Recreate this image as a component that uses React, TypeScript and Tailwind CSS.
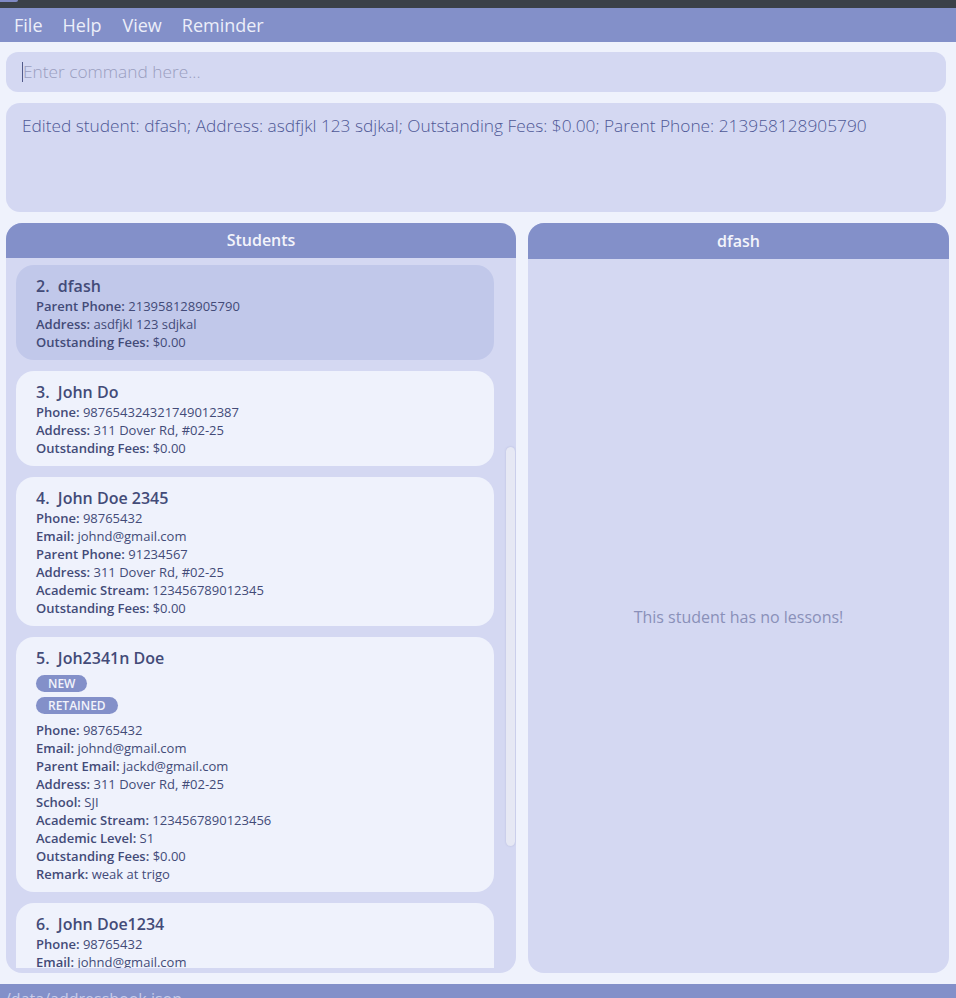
import React from 'react';

type Field = { label: string; value: string };

interface Student {
  index: number;
  name: string;
  tags?: string[];
  fields: Field[];
  selected?: boolean;
}

const STUDENTS: Student[] = [
  {
    index: 2,
    name: 'dfash',
    selected: true,
    fields: [
      { label: 'Parent Phone', value: '213958128905790' },
      { label: 'Address', value: 'asdfjkl 123 sdjkal' },
      { label: 'Outstanding Fees', value: '$0.00' },
    ],
  },
  {
    index: 3,
    name: 'John Do',
    fields: [
      { label: 'Phone', value: '987654324321749012387' },
      { label: 'Address', value: '311 Dover Rd, #02-25' },
      { label: 'Outstanding Fees', value: '$0.00' },
    ],
  },
  {
    index: 4,
    name: 'John Doe 2345',
    fields: [
      { label: 'Phone', value: '98765432' },
      { label: 'Email', value: 'johnd@gmail.com' },
      { label: 'Parent Phone', value: '91234567' },
      { label: 'Address', value: '311 Dover Rd, #02-25' },
      { label: 'Academic Stream', value: '123456789012345' },
      { label: 'Outstanding Fees', value: '$0.00' },
    ],
  },
  {
    index: 5,
    name: 'Joh2341n Doe',
    tags: ['NEW', 'RETAINED'],
    fields: [
      { label: 'Phone', value: '98765432' },
      { label: 'Email', value: 'johnd@gmail.com' },
      { label: 'Parent Email', value: 'jackd@gmail.com' },
      { label: 'Address', value: '311 Dover Rd, #02-25' },
      { label: 'School', value: 'SJI' },
      { label: 'Academic Stream', value: '1234567890123456' },
      { label: 'Academic Level', value: 'S1' },
      { label: 'Outstanding Fees', value: '$0.00' },
      { label: 'Remark', value: 'weak at trigo' },
    ],
  },
  {
    index: 6,
    name: 'John Doe1234',
    fields: [
      { label: 'Phone', value: '98765432' },
      { label: 'Email', value: 'johnd@gmail.com' },
      { label: 'Parent Phone', value: '91234567' },
      { label: 'Address', value: '311 Dover Rd, #02-25' },
    ],
  },
];

function StudentCard({ s }: { s: Student }) {
  return (
    <div
      className={`w-[478px] shrink-0 rounded-[18px] pl-5 pr-4 pt-[10px] pb-[9px] text-[#434b78] ${
        s.selected ? 'bg-[#c1c8ea]' : 'bg-[#eff2fc]'
      }`}
    >
      <div className="h-[22px] text-[16px] font-semibold leading-[22px]">
        {s.index}.&nbsp;&nbsp;{s.name}
      </div>
      {s.tags && (
        <div className="mt-[6px] mb-[7px] flex flex-col items-start gap-[5px]">
          {s.tags.map((t) => (
            <span
              key={t}
              className="h-[17px] rounded-full bg-[#8390c9] px-3 text-[12px] font-semibold leading-[17px] text-[#f2f3fb]"
            >
              {t}
            </span>
          ))}
        </div>
      )}
      {s.fields.map((f) => (
        <div key={f.label} className="h-[18px] text-[13px] leading-[18px]">
          <span className="font-semibold">{f.label}:</span> {f.value}
        </div>
      ))}
    </div>
  );
}

export default function App() {
  return (
    <div
      className="flex h-[998px] w-[956px] flex-col overflow-hidden bg-[#eff2fc]"
      style={{ fontFamily: '"Open Sans", "Noto Sans", sans-serif' }}
    >
      <div className="relative h-[8px] shrink-0 bg-[#3b4148]">
        <div className="absolute left-0 top-0 h-[2px] w-[18px] rounded-br-sm bg-[#7f89c4]" />
      </div>

      <div className="flex h-[34px] shrink-0 items-center gap-5 bg-[#8390c9] pl-[14px] text-[18px] text-[#eceef9]">
        <span>File</span>
        <span>Help</span>
        <span className="ml-px">View</span>
        <span>Reminder</span>
      </div>

      <div className="flex flex-col gap-[11px] px-[6px] pt-[10px]">
        <div className="mr-[4px] flex h-[40px] items-center rounded-[12px] bg-[#d4d8f2] pl-[16px]">
          <div className="h-[20px] w-[1px] bg-[#525a8a]" />
          <span className="text-[17.3px] font-light text-[#9a9ec0]">Enter command here...</span>
        </div>

        <div className="mr-[4px] h-[109px] rounded-[14px] bg-[#d4d8f2] px-4 pt-[10px] text-[17.3px] font-light leading-[26px] text-[#4f5896]">
          Edited student: dfash; Address: asdfjkl 123 sdjkal; Outstanding Fees: $0.00; Parent Phone: 213958128905790
        </div>

        <div className="flex h-[750px] gap-3">
          <div className="relative flex w-[510px] flex-col overflow-hidden rounded-[16px] bg-[#d4d8f2]">
            <div className="flex h-[35px] shrink-0 items-center justify-center bg-[#8390c9] pb-[2px] text-[16px] font-semibold text-[#f3f4fb]">
              Students
            </div>
            <div className="mb-[5px] flex flex-1 flex-col gap-[11px] overflow-hidden pl-[10px] pt-[7px]">
              {STUDENTS.map((s) => (
                <StudentCard key={s.index} s={s} />
              ))}
            </div>
            <div className="absolute left-[500px] top-[224px] h-[399px] w-[9px] rounded-full bg-[#e6e8f4] shadow-[0_0_2px_rgba(90,100,160,0.25)]" />
          </div>

          <div className="flex w-[421px] flex-col overflow-hidden rounded-[16px] bg-[#d4d8f2]">
            <div className="flex h-[36px] shrink-0 items-center justify-center bg-[#8390c9] text-[16px] font-semibold text-[#f3f4fb]">
              dfash
            </div>
            <div className="flex flex-1 items-center justify-center pt-[2px] text-[16px] text-[#8a90b9]">
              This student has no lessons!
            </div>
          </div>
        </div>
      </div>

      <div className="mt-[11px] h-[30px] shrink-0 bg-[#8390c9] pl-[5px] pt-[4px] text-[16px] leading-[22px] text-[#c9cdea]">
        /data/addressbook.json
      </div>
    </div>
  );
}
